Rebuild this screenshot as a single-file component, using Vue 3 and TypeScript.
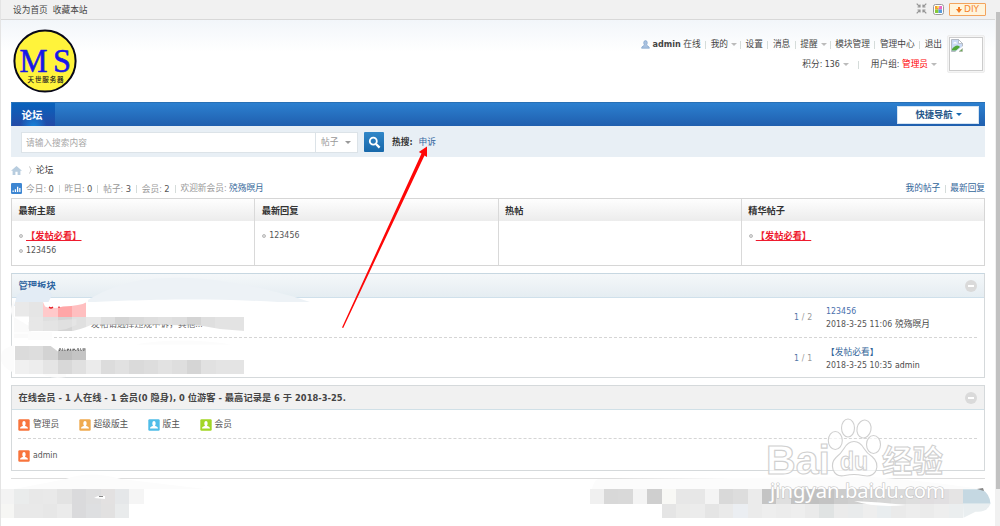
<script setup lang="ts">
interface Cell { x: number; y: number; w: number; h: number; c: string }

const menu = [
  { t: '我的', drop: true }, { t: '设置' }, { t: '消息' }, { t: '提醒', drop: true },
  { t: '模块管理' }, { t: '管理中心' }, { t: '退出' },
]
const stats = [
  { k: '今日', v: '0' }, { k: '昨日', v: '0' }, { k: '帖子', v: '3' }, { k: '会员', v: '2' },
]
const columns = [
  { title: '最新主题', items: [{ t: '【发帖必看】', hot: true }, { t: '123456', hot: false }] },
  { title: '最新回复', items: [{ t: '123456', hot: false }] },
  { title: '热帖', items: [] },
  { title: '精华帖子', items: [{ t: '【发帖必看】', hot: true }] },
]
const forums = [
  { desc: '发帖请选择违规申诉，其他...', threads: 1, posts: 2, last: '123456', time: '2018-3-25 11:06', by: '殑殇暝月' },
  { desc: '', threads: 1, posts: 1, last: '【发帖必看】', time: '2018-3-25 10:35', by: 'admin' },
]
const roles = [
  { t: '管理员', c: '#f8743c', w: 60.5 }, { t: '超级版主', c: '#efab50', w: 69 },
  { t: '版主', c: '#50bde8', w: 52 }, { t: '会员', c: '#a2d624', w: 40 },
]

function strip(x: number, y: number, h: number, colors: string[]): Cell[] {
  return colors.map((c, i) => ({ x: x + i * 14.36, y, w: 14.5, h, c }))
}
const upperCells: Cell[] = [
  ...strip(14.5, 302, 14.6, ['#e9e9e9', '#e5e5e5', '#ffc9ca', '#ffa6a7', '#ffadae']),
  { x: 71.8, y: 302, w: 14.4, h: 14.6, c: '#ffbfc0' },
  ...strip(28.8, 316.5, 14.6, ['#e7e7e7', '#dfdfdf', '#d4d4d4', '#e0e0e0', '#e8e8e8', '#dfdfdf', '#d4d4d4', '#dadada', '#dedede', '#e1e1e1', '#dedede', '#d4d4d4', '#dfdfdf', '#e3e3e3', '#e3e3e3']),
]
const lowerCells: Cell[] = [
  ...strip(14.5, 345.5, 14.5, ['#dbdbdb', '#dddddd', '#d3d3d3', '#bcbcbc', '#c4c4c4']),
  ...strip(14.5, 360, 13.6, ['#f0f0f0', '#ededed', '#e5e5e5', '#d8d8d8', '#e0e0e0', '#ebebeb', '#dcdcdc', '#e1e1e1', '#dadada', '#dddddd', '#e2e2e2', '#dedede', '#d5d5d5', '#e1e1e1', '#e4e4e4', '#e4e4e4']),
]
const footCells: Cell[] = [
  ...strip(0, 489.3, 14.4, ['#f3f3f3', '#eaecec', '#e8e8e8', '#e9e9e9', '#e3e3e3', '#dadadc', '#dededf', '#e3e1e1', '#e5e7e9', '#f5f5f5']),
  ...strip(0, 503.7, 14, ['#f6f6f4', '#e9e9e9', '#e9e9e9', '#e7e7e7', '#ebebeb', '#dadadc', '#dedfe1', '#e2e1e1', '#e9ebec']),
  ...strip(589.7, 489.3, 14.5, ['#f0f0f0', '#d8d8d8', '#d9d9d9', '#f4f4f4', '#cfcfcf', '#f8f8f5', '#e7e7e7', '#e7e7e7', '#f4f4f4', '#d9d9d9', '#dddddd', '#ebebeb', '#c4c4c4', '#dfdfdf', '#c3c3c3', '#c0c0c0', '#c3c3c3', '#cccccc', '#cfcfcf', '#d3d3d3', '#d6d6d6', '#dadada', '#dedede', '#e0dddf', '#e1dfe1', '#e5e4e4']),
  ...strip(661.5, 503.7, 14, ['#e5e5e5', '#ebebea', '#ececec', '#e5e5e5', '#eaeaea', '#ebeef2', '#ebebeb', '#eeeeee', '#ececec', '#eeeeee', '#eaeaea', '#e0e3e3', '#ebebeb', '#e9ebec', '#eeeeee', '#e9edef', '#eaeaea', '#ededed', '#ebebeb', '#eeeeee', '#ebeeef']),
]
</script>

<template>
  <div class="page">
    <header class="topbar">
      <div class="quick"><span>设为首页</span><span>收藏本站</span></div>
      <div class="tools">
        <svg class="shrink" width="11" height="11" viewBox="0 0 11 11" fill="none" stroke="#969696" stroke-width="1.2">
          <path d="M.7 .7 4 4M4 1.5V4H1.5M10.3.7 7 4M7 1.5V4H9.5M.7 10.3 4 7M1.5 7H4V9.5M10.3 10.3 7 7M9.5 7H7V9.5" />
        </svg>
        <svg class="palette" width="11" height="11" viewBox="0 0 11 11">
          <rect x=".5" y=".5" width="10" height="10" rx="2" fill="#fff" stroke="#999" />
          <path fill="#f2a12e" d="M2 2h3.5v3.5H2z" /><path fill="#e966c5" d="M5.5 2H9v3.5H5.5z" />
          <path fill="#88ca38" d="M2 5.5h3.5V9H2z" /><path fill="#579bdd" d="M5.5 5.5H9V9H5.5z" />
          <path fill="#f8e75d" d="M4.2 2h2v2h-2z" />
        </svg>
        <div class="diy">
          <svg width="6" height="6" viewBox="0 0 6 6"><path fill="#f47a20" d="M2 0h2v2h2L3 6 0 2h2z" /></svg><span>DIY</span>
        </div>
      </div>
    </header>

    <section class="head">
      <svg class="logo" width="64" height="64" viewBox="0 0 64 64">
        <circle cx="32" cy="32" r="30.6" fill="#fff33b" stroke="#080818" stroke-width="2" />
        <text class="ms" x="6.500" y="43" textLength="28" lengthAdjust="spacingAndGlyphs">M</text>
        <text class="ms" x="40" y="43" textLength="18" lengthAdjust="spacingAndGlyphs">S</text>
        <text class="motto" x="14.500" y="53" textLength="36">天世服务器</text>
      </svg>
      <div class="account">
        <div class="acct-text">
          <div class="line1">
            <svg width="9" height="9" viewBox="0 0 9 9"><path fill="#a9c1df" stroke="#7fa3cd" stroke-width=".7" d="M4.500.6C2.200.6 2.500 4 3.500 5 3.400 6 .6 5.900.6 8.200h7.800C8.400 5.900 5.600 6 5.500 5 6.500 4 6.800.6 4.500.6z" /></svg>
            <b>admin</b><span>在线</span>
            <template v-for="m in menu" :key="m.t">
              <i class="bar"></i><span>{{ m.t }}</span><i v-if="m.drop" class="caret"></i>
            </template>
          </div>
          <div class="line2">
            <span>积分: 136</span><i class="caret"></i><i class="bar wide"></i>
            <span>用户组: <em>管理员</em></span><i class="caret"></i>
          </div>
        </div>
        <div class="avatar">
          <div class="frame">
            <svg width="12" height="13" viewBox="0 0 12 13">
              <path fill="#c9daf5" stroke="#a8afb8" stroke-width=".8" d="M.5.5h7l4 4v3L7 12.500H.5z" />
              <path fill="#fff" stroke="#a8afb8" stroke-width=".7" d="M7.500.5v4h4z" />
              <path fill="#fff" d="M2 4.500q0-1 1-1 1-1.400 2 0 1 0 1 1z" />
              <path fill="#51a839" d="M1 11.500V10q4-5 7-3l1 1-4 3.500z" />
              <path fill="#fff" d="m4 13 8-6v6z" /><path fill="#67aa50" stroke="#aaa" stroke-width=".5" d="m8 12.500 3.500-3v3z" />
            </svg>
          </div>
        </div>
      </div>
    </section>

    <main>
      <nav>
        <div class="tab">论坛</div>
        <div class="jump"><span>快捷导航</span><i class="caret"></i></div>
      </nav>
      <div class="search">
        <div class="field">请输入搜索内容</div>
        <div class="type"><span>帖子</span><i class="caret"></i></div>
        <div class="go">
          <svg width="13" height="13" viewBox="0 0 13 13" fill="none" stroke="#fff"><circle cx="5.300" cy="5.200" r="3.500" stroke-width="1.800" /><path stroke-width="2.300" d="m8 8 3.600 3.600" /></svg>
        </div>
        <b>热搜:</b><span class="term">申诉</span>
      </div>

      <div class="crumb">
        <svg width="11" height="9" viewBox="0 0 11 9"><path fill="#b8cddf" d="M5.500 0 11 4.800H9.400V9H6.600V5.800H4.400V9H1.600V4.800H0z" /></svg>
        <svg class="sep" width="3" height="8" viewBox="0 0 3 8" fill="none" stroke="#bbb" stroke-width=".8"><path d="m.4.4 1.800 3.600L.4 7.600" /></svg>
        <span>论坛</span>
      </div>
      <div class="stats">
        <svg width="11" height="11" viewBox="0 0 11 11"><rect width="11" height="11" rx="1.300" fill="#3d86d2" /><path fill="#fff" d="M1.500 7.500h1.300V9H1.500zM3.800 6.300h1.300V9H3.800zM6 3.700h1.300V9H6zM8.200 5h1.300v4H8.200z" /></svg>
        <template v-for="s in stats" :key="s.k">
          <span>{{ s.k }}: <em>{{ s.v }}</em></span><i class="bar"></i>
        </template>
        <span>欢迎新会员: <a>殑殇暝月</a></span>
        <div class="mine"><a>我的帖子</a><i class="bar"></i><a>最新回复</a></div>
      </div>

      <div class="board">
        <div v-for="c in columns" :key="c.title" class="col">
          <h3>{{ c.title }}</h3>
          <ul><li v-for="i in c.items" :key="i.t"><i class="dot"></i><span :class="{ hot: i.hot }">{{ i.t }}</span></li></ul>
        </div>
      </div>

      <section class="panel forums">
        <h2><span>管理板块</span><i class="fold"></i></h2>
        <div v-for="f in forums" :key="f.time" class="row">
          <div class="desc"><span>{{ f.desc }}</span></div>
          <div class="count"><a>{{ f.threads }}</a> / {{ f.posts }}</div>
          <div class="last"><a>{{ f.last }}</a><div>{{ f.time }} <span>{{ f.by }}</span></div></div>
        </div>
      </section>

      <section class="panel online">
        <h2><span>在线会员 - 1 人在线 - 1 会员(0 隐身), 0 位游客 - 最高记录是 6 于 2018-3-25.</span><i class="fold"></i></h2>
        <div class="roles">
          <div v-for="r in roles" :key="r.t" class="role" :style="{ width: r.w + 'px' }">
            <svg width="12" height="12" viewBox="0 0 12 12"><rect x=".3" y=".3" width="11.400" height="11.400" rx="1.200" :fill="r.c" /><path fill="#fff" d="M6 2C4 2 4 5.500 5 6.500c0 1-3 .8-3 3h8c0-2.200-3-2-3-3C8 5.500 8 2 6 2z" /></svg>{{ r.t }}
          </div>
        </div>
        <div class="users">
          <svg width="12" height="12" viewBox="0 0 12 12"><rect x=".3" y=".3" width="11.400" height="11.400" rx="1.200" fill="#f8743c" /><path fill="#fff" d="M6 2C4 2 4 5.500 5 6.500c0 1-3 .8-3 3h8c0-2.200-3-2-3-3C8 5.500 8 2 6 2z" /></svg><span>admin</span>
        </div>
      </section>
      <div class="rule"></div>
    </main>

    <div class="scroll"><i></i></div>

    <svg class="overlay" width="1000" height="526" viewBox="0 0 1000 526">
      <path fill="#edf2f6" d="M88 300C105 290 130 278 170 278 220 276 280 292 310 302H180 88z" />
      <path fill="#fff" d="M86 302.500C120 301 190 297 278 302H290V309H86z" />
      <path fill="#e3ecf5" d="M28 288q6-3 11-1l9 2 4 6-4 8-12 3H14l3-11z" />
      <path fill="#fafafa" d="M14 300q-5 9-2 16l17 10 5 12H14z" />
      <g shape-rendering="crispEdges">
        <rect v-for="(c, i) in upperCells" :key="i" :x="c.x" :y="c.y" :width="c.w" :height="c.h" :fill="c.c" />
      </g>
      <path fill="#fff" d="M43 302h43v.5q-5 3-23 4-12 3-18 0z" />
      <path fill="none" stroke="#e5232b" stroke-width="1.300" d="M49 307q2 2 4 0M59 308v-1.500" />
      <path fill="#fff" d="M14 316.500v16h52Q80 330 91 325H165L200 325.500 220 329 244.500 331v2H310v-1l-65 1.500H14zM14 316.500h15v9z" />
      <path fill="#e7e7e7" d="M28.500 322v7q22 4 38 0l10-4V319z" opacity=".6" />
      <path fill="#fcfcfc" d="M28 332h24v13H28zM2 352q7-9 26-8l28 1H14v28Q-1 366 1 356zM38 371h28v6q-18 3-28-6z" />
      <g shape-rendering="crispEdges">
        <rect v-for="(c, i) in lowerCells" :key="i" :x="c.x" :y="c.y" :width="c.w" :height="c.h" :fill="c.c" />
      </g>
      <path fill="#fff" d="M14 340h74v9.500H58v2l-8-6H14z" />
      <path fill="none" stroke="#444" stroke-width="1.100" stroke-dasharray="2 1 1 1.500 3 1.200" d="M59 349h6m2 .3h8m2-.3h9" />
      <path fill="none" stroke="#666" stroke-width="1.100" stroke-dasharray="1 1.700" d="M59 350.500h27" />
      <path fill="#fcfcfc" d="M135 344.500q45-8 97 0z" />
      <path fill="#fcfcfc" d="M14 489 66 479q23-9 55 0l84 10zM592 489q2-9 6-10h14l260-2q65 5 108 12z" />
      <g shape-rendering="crispEdges">
        <rect v-for="(c, i) in footCells" :key="i" :x="c.x" :y="c.y" :width="c.w" :height="c.h" :fill="c.c" />
      </g>
      <path fill="#c5d8e2" d="M963 489.300h19q8 5 8.500 14.400H963z" />
      <path fill="#e9eef0" d="M963 503.700h27.500q-3 9-15 8l-12 6z" />
      <path fill="#888" d="m977 489 6-1 1 3z" />
      <path fill="#fff" d="M94 498q4-3 11-2v3zM854 501q25 1 52 4-30 3-52-4z" />
      <path fill="#888" d="M99 496h4v1h-4z" />
      <g class="mark">
        <text class="brand" x="766" y="474" textLength="64" lengthAdjust="spacingAndGlyphs">Bai</text>
        <ellipse cx="848" cy="428" rx="6.500" ry="9" /><ellipse cx="864" cy="429" rx="7" ry="9" transform="rotate(12 864 429)" />
        <ellipse cx="835.300" cy="440.500" rx="7" ry="9" /><ellipse cx="873.500" cy="444.500" rx="7" ry="9" />
        <path d="M854 441.500q-6 0-10 7-3 5-8 9-5 5-3 12 3 8 12 6 9-2 18 0 10 2 13-5 3-8-4-14-5-3-8-8-4-7-10-7z" />
        <text class="du" x="840" y="470" textLength="28" lengthAdjust="spacingAndGlyphs">du</text>
        <text class="exp" x="882" y="472" textLength="61" lengthAdjust="spacingAndGlyphs">经验</text>
        <text class="url" x="770" y="498" textLength="175" lengthAdjust="spacingAndGlyphs">jingyan.baidu.com</text>
      </g>
      <path fill="#fe0707" d="M342 327.500 421.500 153.500 418.800 152 427 146.500 427 157 424.500 155.500 343.200 328z" />
    </svg>
  </div>
</template>

<style>
html, body { overflow: hidden; background: #fff; }
</style>

<style scoped>
* { box-sizing: border-box; }
.page { position: relative; width: 1000px; height: 526px; overflow: hidden; background: #fff; border-left: 1px solid #e4e4e4; font: 8.700px/13px "DejaVu Sans Condensed", "Noto Sans", "Noto Sans CJK SC", sans-serif; color: #444; white-space: nowrap; }
i { font-style: normal; } em { font-style: normal; color: #555; } a { color: #336699; }
svg { display: block; flex: none; }
.topbar { display: flex; justify-content: space-between; height: 20px; padding: 0 10px 0 12px; width: 994px; background: #f1f1f1; border-bottom: 1px solid #d8d8d8; }
.quick { display: flex; gap: 5px; line-height: 21px; }
.tools { display: flex; align-items: center; height: 19px; }
.shrink { margin-top: -2px; }
.palette { margin: 0 5px 0 6px; }
.diy { display: flex; align-items: center; justify-content: center; gap: 2px; width: 37px; height: 13px; border: 1px solid #f3a45d; border-radius: 1px; background: #fff4dc; color: #f48430; font-family: "DejaVu Sans", sans-serif; font-size: 9px; margin-right: -1px; }
.head { display: flex; justify-content: space-between; height: 82px; width: 994px; padding: 9px 10px 0 12px; background: linear-gradient(#f2f6fa, #fff 32px); }
.ms { font: 34px "Liberation Serif", serif; fill: #1717e8; stroke: #1717e8; stroke-width: .6; }
.motto { font: 6.500px "Noto Sans CJK SC", sans-serif; fill: #222; stroke: #222; stroke-width: .15; }
.account { display: flex; gap: 5px; padding-top: 6px; }
.acct-text { padding-top: 3px; }
.line1, .line2 { display: flex; align-items: center; height: 13px; justify-content: flex-end; }
.line1 b { margin: 0 2.500px 0 3px; font-size: 9px; }
.line2 { margin-top: 7px; padding-right: 5px; }
.line2 em { color: #f00; }
.bar { width: 1px; height: 8px; background: #d5dcda; margin: 0 4.500px; flex: none; }
.bar.wide { margin: 0 12px 0 9px; }
.caret { width: 0; height: 0; border: 3px solid transparent; border-top-color: #bbb; border-bottom: 0; margin-left: 3px; flex: none; }
.line1 .caret + .bar { margin-left: 3px; }
.avatar { width: 38px; height: 38px; padding: 1px; border: 1px solid #ededed; border-radius: 2px; background: #f5f5f5; }
.frame { height: 34px; border: 1px solid #ccc; background: #fff; padding: 1px; }
main { width: 974px; margin-left: 10px; }
nav { display: flex; justify-content: space-between; align-items: center; height: 24px; padding-right: 6px; background: linear-gradient(#2c80d0, #205fae); border-top: 1px solid #2870b5; }
.tab { width: 43px; height: 23px; margin-left: 1px; padding-right: 3px; text-align: center; font: bold 10.500px/24px "Noto Sans CJK SC", sans-serif; color: #fff; background: radial-gradient(ellipse at 50% 110%, #1489e0, transparent 45%), linear-gradient(#0863bd, #244aa6); }
.jump { display: flex; align-items: center; justify-content: center; width: 82px; height: 18px; padding-left: 1px; border: 1px solid #d5e4f2; background: #fff; color: #27588a; font-weight: bold; font-size: 9.300px; }
.jump .caret { border-top-color: #1b6ab0; }
.search { display: flex; align-items: center; height: 31px; padding: 1px 0 0 10px; background: #e8eff5; }
.field, .type { height: 21px; border: 1px solid #dce3e8; background: #fff; color: #a6a6a6; line-height: 21px; }
.field { width: 295px; padding-left: 4px; }
.type { display: flex; align-items: center; width: 43px; margin-left: -1px; padding-left: 5px; color: #999; }
.type .caret { margin-left: 7px; border-top-color: #999; }
.go { display: flex; align-items: center; justify-content: center; width: 20px; height: 20px; margin: 0 8px 0 6px; border-radius: 1px; background: linear-gradient(#3187c8, #1768aa); }
.search b { color: #333; } .term { margin-left: 6px; color: #36699f; }
.crumb { display: flex; align-items: center; height: 25px; padding-top: 1px; color: #333; }
.sep { margin: 0 4px 0 7px; }
.stats { display: flex; align-items: center; height: 13px; margin-bottom: 3px; color: #999; }
.stats em { font-size: 9.300px; }
.stats > svg { margin-right: 4px; }
.stats > .bar { margin: 0 4.900px; }
.mine { display: flex; align-items: center; margin-left: auto; }
.board { display: flex; height: 68px; border: 1px solid #d6d6d6; }
.col { flex: 1; border-left: 1px solid #d9d9d9; } .col:first-child { border-left: 0; }
h2, h3, ul { margin: 0; padding: 0; font-size: 8.700px; }
h3 { height: 22px; padding-left: 6.500px; line-height: 23px; color: #333; background: linear-gradient(#fefefe, #ececec); font-size: 9.200px; }
ul { list-style: none; padding: 7px 0 0 7px; }
li { display: flex; align-items: center; height: 15px; color: #555; letter-spacing: .06px; }
.dot { width: 4px; height: 4px; margin-right: 3px; border: 1px solid #bbb; border-radius: 50%; background: #ddd; }
.hot { color: #ee1b2e; font-weight: bold; font-size: 9.200px; text-decoration: underline; }
.panel { border: 1px solid #d5d9db; }
.panel h2 { display: flex; align-items: center; justify-content: space-between; height: 24px; padding: 0 7px 0 6.500px; }
.forums { height: 105px; margin-top: 7px; border-top-color: #c7d7e1; }
.forums h2 { background: linear-gradient(#f4f7f9, #e5edf2); border-bottom: 1px solid #cfe0eb; color: #2d64a0; font-size: 9.300px; }
.fold { position: relative; width: 12px; height: 12px; border-radius: 50%; background: #dadada; }
.fold::after { content: ""; position: absolute; left: 3px; top: 5px; width: 6px; height: 2px; background: #fff; }
.row { display: flex; align-items: center; height: 39px; margin: 0 7px; }
.row + .row { height: 42px; border-top: 1px dashed #d5d5d5; }
.desc { position: relative; z-index: 2; width: 775px; padding: 13px 0 0 72px; color: #666; }
.desc span { display: inline-block; clip-path: inset(7px 0 0 0); }
.count { width: 32px; color: #999; letter-spacing: .2px; } .count a { color: #5577a8; }
.last { line-height: 13px; color: #555; letter-spacing: .06px; } .last span { color: #444; } .row:nth-child(2) .last a { color: #4b71ad; }
.online { height: 86px; margin-top: 7px; }
.online h2 { background: #f1f1f1; border-bottom: 1px solid #d0e0e7; color: #444; font-size: 9.250px; letter-spacing: .02px; }
.roles { display: flex; height: 29px; padding-top: 1px; margin: 0 7px 0 6px; border-bottom: 1px dashed #d5d5d5; }
.role, .users { display: flex; align-items: center; gap: 3px; color: #555; }
.users { height: 33px; padding: 0 0 0 6px; }
.users span { margin-top: -1px; }
.rule { height: 1px; margin-top: 7px; background: #ddd; }
.scroll { position: absolute; right: 0; top: 0; width: 5px; height: 526px; background: #f1f1f1; padding: 12px 0 0 1px; }
.scroll i { display: block; height: 477px; background: #c1c1c1; }
.overlay { position: absolute; left: -1px; top: 0; z-index: 1; }
.mark { fill: rgba(255,255,255,.65); stroke: #d0d0d0; stroke-width: 1.100; }
.brand { font: bold 40px "Liberation Sans", sans-serif; } .du { font: bold 26px "Liberation Sans", sans-serif; }
.exp { font: bold 31px "Noto Sans CJK SC", sans-serif; }
.url { font: 20px "Noto Sans", sans-serif; fill: #fff; stroke: #c4c4c4; stroke-width: 1.200; paint-order: stroke; }
</style>
